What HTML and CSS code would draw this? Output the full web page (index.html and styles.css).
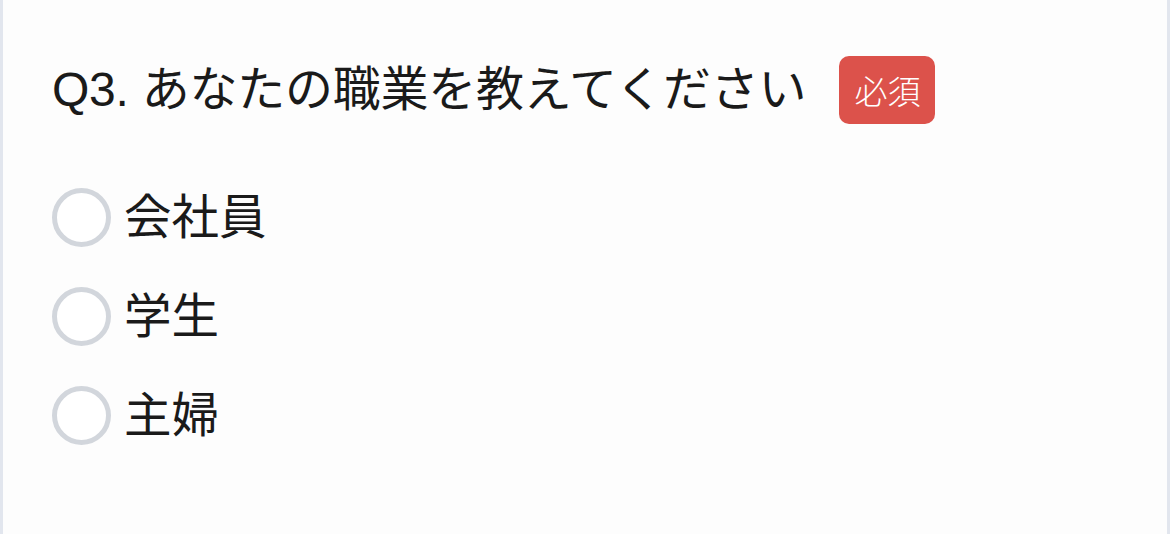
FILE: index.html
```html
<!DOCTYPE html>
<html lang="ja">
<head>
<meta charset="utf-8">
<link rel="stylesheet" href="styles.css">
</head>
<body>
<div class="card">
  <div class="question">
    <span class="q-title"><span class="q-num">Q3.</span> あなたの職業を教えてください</span>
    <span class="badge">必須</span>
  </div>
  <div class="options">
    <label class="option"><span class="radio"></span><span class="opt-label">会社員</span></label>
    <label class="option"><span class="radio"></span><span class="opt-label">学生</span></label>
    <label class="option"><span class="radio"></span><span class="opt-label">主婦</span></label>
  </div>
</div>
</body>
</html>
```
FILE: styles.css
```css
html, body {
  margin: 0;
  padding: 0;
  background: #fdfdfd;
}
body {
  font-family: "Liberation Sans", "Noto Sans CJK JP", sans-serif;
  color: #1a1a1a;
}
.card {
  box-sizing: border-box;
  height: 534px;
  border-left: 3px solid #e2e6ee;
  border-right: 3px solid #e2e6ee;
  padding: 56px 0 0 49px;
  background: #fdfdfd;
}
.question {
  display: flex;
  align-items: center;
  height: 68px;
}
.q-title {
  font-size: 48px;
  line-height: 68px;
  letter-spacing: -0.25px;
}
.badge {
  margin-left: 33px;
  width: 96px;
  height: 68px;
  border-radius: 10px;
  background: #dc524b;
  color: #fff;
  font-size: 33px;
  font-weight: 300;
  display: flex;
  align-items: center;
  justify-content: center;
}
.options {
  display: flex;
  flex-direction: column;
  gap: 40px;
  margin-top: 64px;
}
.option {
  display: flex;
  align-items: center;
  height: 59px;
}
.radio {
  box-sizing: border-box;
  width: 59px;
  height: 59px;
  border: 5.5px solid #d2d6dc;
  border-radius: 50%;
  background: #fff;
  flex: none;
}
.opt-label {
  margin-left: 13px;
  font-size: 47.5px;
  line-height: 59px;
}
```
